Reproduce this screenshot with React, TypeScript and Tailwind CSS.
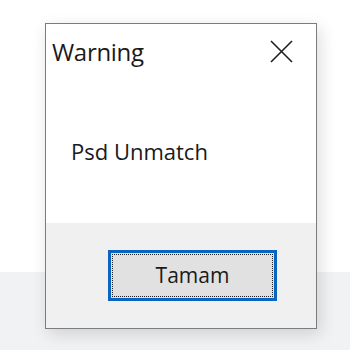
import React from 'react';

const CloseIcon: React.FC = () => (
  <svg width="23" height="23" viewBox="0 0 23 23" fill="none">
    <path d="M1 1L22 22M22 1L1 22" stroke="#1f1f1f" strokeWidth={1.6} />
  </svg>
);

const App: React.FC = () => {
  return (
    <div
      className="w-[350px] h-[350px] overflow-hidden bg-[linear-gradient(to_bottom,#ffffff_272px,#f1f2f4_272px)] pt-[23px] pl-[45px]"
      style={{ fontFamily: '"Segoe UI", "Open Sans", "Liberation Sans", sans-serif' }}
    >
      <div className="w-[272px] h-[306px] border border-[#7c7c7c] bg-white flex flex-col shadow-[3px_5px_16px_rgba(0,0,0,0.14)]">
        <div className="h-[199px] flex flex-col">
          <div className="flex items-start justify-between pl-[6px] pr-[23px] pt-[13px]">
            <span className="text-[24px] leading-[30px] text-[#1a1a1a] tracking-[-0.3px]">Warning</span>
            <div className="pt-[3px]">
              <CloseIcon />
            </div>
          </div>
          <div className="pl-[25px] pt-[70px] text-[22px] leading-[28px] text-[#1a1a1a]">Psd Unmatch</div>
        </div>
        <div className="flex-1 bg-[#f0f0f0] flex justify-end items-start pt-[27px] pr-[39px]">
          <button className="w-[169px] h-[51px] border-[3px] border-[#0a64c2] bg-[#e1e1e1] p-[1px]">
            <div className="w-full h-full border border-dotted border-[#222] flex items-center justify-center text-[21px] text-[#1a1a1a]">
              Tamam
            </div>
          </button>
        </div>
      </div>
    </div>
  );
};

export default App;
